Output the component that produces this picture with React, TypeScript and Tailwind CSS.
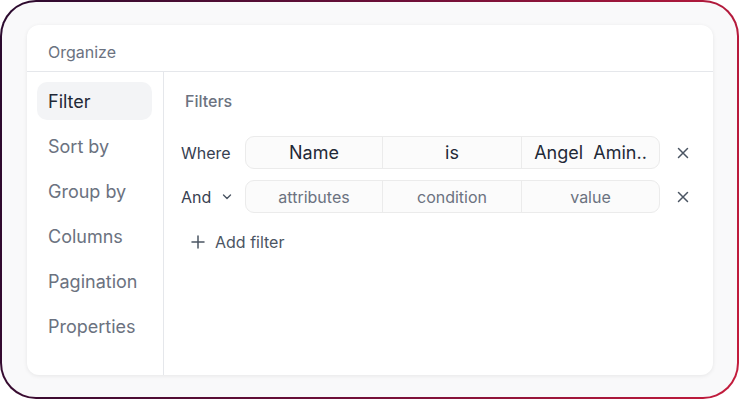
import React from "react";

const XIcon = () => (
  <svg width="12" height="12" viewBox="0 0 12 12" fill="none" stroke="#4b5563" strokeWidth="1.5" strokeLinecap="round">
    <path d="M1.5 1.5 L10.5 10.5 M10.5 1.5 L1.5 10.5" />
  </svg>
);

const Chevron = () => (
  <svg width="10" height="6" viewBox="0 0 10 6" fill="none" stroke="#4b5563" strokeWidth="1.4" strokeLinecap="round" strokeLinejoin="round">
    <path d="M1.5 1 L5 4.5 L8.5 1" />
  </svg>
);

const Plus = () => (
  <svg width="14" height="14" viewBox="0 0 14 14" fill="none" stroke="#4b5563" strokeWidth="1.5" strokeLinecap="round">
    <path d="M7 1 V13 M1 7 H13" />
  </svg>
);

export default function App() {
  const items = ["Filter", "Sort by", "Group by", "Columns", "Pagination", "Properties"];
  return (
    <div className="w-[740px] h-[400px] bg-white" style={{ fontFamily: "Inter, 'Noto Sans', sans-serif" }}>
      <div className="w-[739px] h-[399px] rounded-[36px] p-[2px] bg-[linear-gradient(100deg,#2a0a2e_0%,#6e0f38_50%,#c41c3c_100%)]">
        <div className="w-full h-full rounded-[34px] bg-[#f9f9fa] pt-[23px] pl-[25px]">
          <div className="w-[686px] h-[350px] bg-white rounded-[12px] shadow-[0_1px_4px_rgba(0,0,0,0.08)] flex flex-col">
            <div className="h-[47px] border-b border-[#e5e7eb] pl-[21px] pt-[15px] text-[16px] leading-[24px] text-[#6b7280]">
              Organize
            </div>
            <div className="flex flex-1">
              <div className="w-[137px] border-r border-[#e5e7eb] pl-[10px] pt-[10px] flex flex-col gap-[7px]">
                {items.map((it, i) => (
                  <div
                    key={it}
                    className={
                      i === 0
                        ? "w-[115px] h-[38px] rounded-[10px] bg-[#f3f4f6] px-[11px] flex items-center text-[18px] text-[#1f2937]"
                        : "w-[115px] h-[38px] rounded-[10px] px-[11px] flex items-center text-[18px] text-[#6b7280]"
                    }
                  >
                    {it}
                  </div>
                ))}
              </div>
              <div className="flex-1 pl-[17px] pt-[10px] flex flex-col">
                <div className="h-[37px] flex items-center pl-[4px] text-[16px] font-medium text-[#6b7280]">Filters</div>
                <div className="mt-[17px] flex items-center h-[33px]">
                  <div className="w-[64px] text-[16px] text-[#374151]">Where</div>
                  <div className="w-[415px] h-[33px] rounded-[9px] border border-[#ebebeb] bg-[#fbfbfb] flex text-[18px] text-[#1f2937]">
                    <div className="w-[137px] flex items-center justify-center border-r border-[#ebebeb]">Name</div>
                    <div className="w-[139px] flex items-center justify-center border-r border-[#ebebeb]">is</div>
                    <div className="flex-1 flex items-center justify-center whitespace-pre">Angel  Amin..</div>
                  </div>
                  <div className="ml-[17px]"><XIcon /></div>
                </div>
                <div className="mt-[11px] flex items-center h-[33px]">
                  <div className="w-[64px] flex items-center text-[16px] text-[#374151]">
                    <span>And</span>
                    <span className="ml-[11px] mt-[1px]"><Chevron /></span>
                  </div>
                  <div className="w-[415px] h-[33px] rounded-[9px] border border-[#ebebeb] bg-[#fbfbfb] flex text-[16px] text-[#6b7280]">
                    <div className="w-[137px] flex items-center justify-center border-r border-[#ebebeb]">attributes</div>
                    <div className="w-[139px] flex items-center justify-center border-r border-[#ebebeb]">condition</div>
                    <div className="flex-1 flex items-center justify-center">value</div>
                  </div>
                  <div className="ml-[17px]"><XIcon /></div>
                </div>
                <div className="mt-[14px] h-[30px] flex items-center pl-[10px] gap-[10px] text-[16px] text-[#4b5563]">
                  <Plus />
                  <span>Add filter</span>
                </div>
              </div>
            </div>
          </div>
        </div>
      </div>
    </div>
  );
}
